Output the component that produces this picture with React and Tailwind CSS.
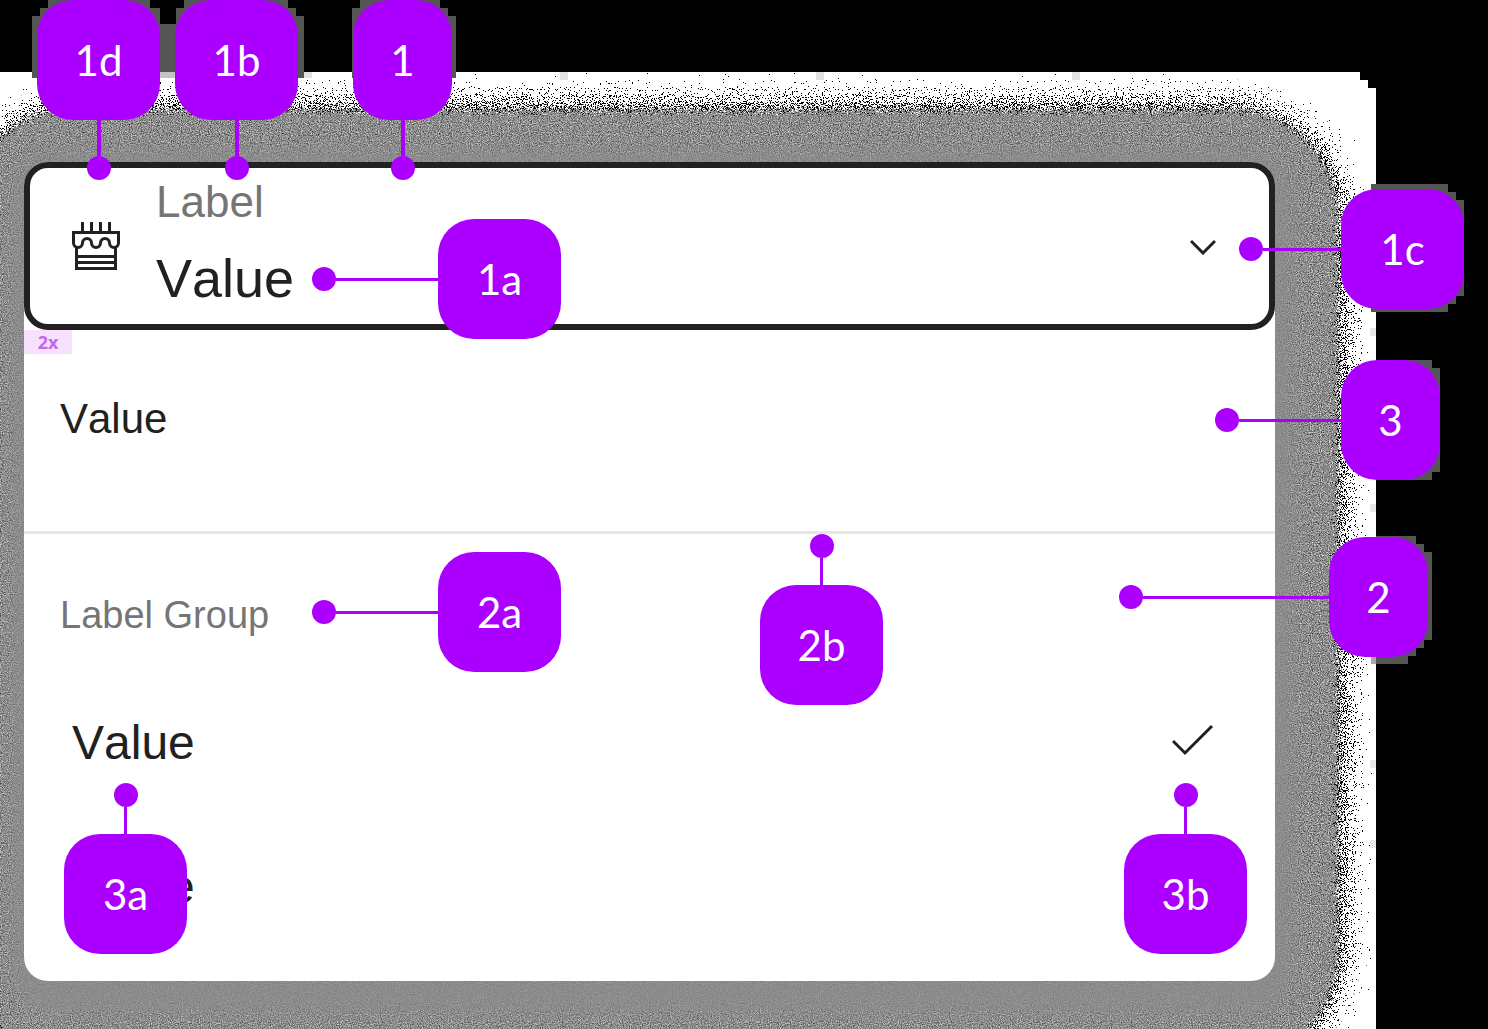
import React from "react";

const directions = {
  up: "flex-col-reverse",
  down: "flex-col",
  left: "flex-row-reverse",
};

function Callout({ id, point, stem, className = "" }) {
  const wide = id.length > 1;
  return (
    <div className={`flex items-center ${directions[point]} ${className}`}>
      <div
        className={`flex h-[120px] shrink-0 items-center justify-center rounded-[36px] bg-[#ab00ff] font-[Lato,sans-serif] text-[42px] leading-none text-white ${
          wide ? "w-[123px]" : "w-[99px]"
        }`}
      >
        {id}
      </div>
      <div className={`shrink-0 bg-[#ab00ff] ${stem}`} />
      <div className="size-6 shrink-0 rounded-full bg-[#ab00ff]" />
    </div>
  );
}

function CakeIcon() {
  return (
    <svg viewBox="0 0 48 48" className="size-12 shrink-0" fill="none" stroke="#212121" strokeWidth="3" aria-hidden="true">
      <path d="M10.5 0v10M19.5 0v10M28.5 0v10M37.5 0v10" />
      <path d="M1.5 10.5H46.5V21a4.5 4.5 0 0 1-9 0a4.5 4.5 0 0 0-9 0a4.5 4.5 0 0 1-9 0a4.5 4.5 0 0 0-9 0a4.5 4.5 0 0 1-9 0Z" />
      <path d="M4.5 25V46.5H43.5V25M4.5 34.5H43.5M4.5 40.5H43.5" />
    </svg>
  );
}

function Filters() {
  return (
    <svg className="absolute size-0" aria-hidden="true">
      <defs>
        <filter id="scatter" x="-10%" y="-10%" width="120%" height="120%" colorInterpolationFilters="sRGB">
          <feTurbulence type="fractalNoise" baseFrequency="0.87" numOctaves="2" seed="4" result="n" />
          <feDisplacementMap in="SourceGraphic" in2="n" scale="110" xChannelSelector="R" yChannelSelector="G" />
        </filter>
        <filter id="grain" x="-10%" y="-10%" width="120%" height="120%" colorInterpolationFilters="sRGB">
          <feTurbulence type="fractalNoise" baseFrequency="0.9" numOctaves="2" seed="9" result="n" />
          <feDisplacementMap in="SourceGraphic" in2="n" scale="26" xChannelSelector="R" yChannelSelector="G" result="d" />
          <feColorMatrix in="n" type="matrix" values="0 0 1 0 0.05  0 0 1 0 0.05  0 0 1 0 0.05  0 0 0 0 1" result="g" />
          <feComposite in="g" in2="d" operator="in" />
        </filter>
      </defs>
    </svg>
  );
}

function Shadow() {
  return (
    <div className="absolute inset-0 overflow-hidden" aria-hidden="true">
      <div className="absolute top-[72px] right-[112px] bottom-0 left-0 overflow-hidden bg-white [clip-path:polygon(0_0,calc(100%-16px)_0,calc(100%-16px)_8px,calc(100%-8px)_8px,calc(100%-8px)_16px,100%_16px,100%_100%,0_100%)]">
        <div className="absolute top-[37px] right-[37px] -bottom-[32px] -left-[34px] rounded-[110px] bg-black [filter:url(#scatter)]" />
        <div className="absolute top-[37px] right-[38px] -bottom-[32px] -left-[34px] rounded-[106px] bg-[#8c8c8c] [filter:url(#grain)]" />
        <div className="absolute top-[78px] right-[84px] bottom-[14px] left-[12px] rounded-[40px] bg-[#8c8c8c] opacity-80 blur-[10px]" />
      </div>
      <svg className="absolute top-0 left-0 h-[80px] w-[1100px]">
        <path fill="#555" d="M48 0H150V8H160V24H176V8H184V0H288V8H296V16H304V78H176V72H160V78H32V16H40V8H48Z" />
        <path fill="#555" d="M360 0H440V8H448V16H456V78H352V8H360Z" />
        <path fill="#c4c4c4" d="M160 72h16v6h-16Z" />
        <path fill="#e2e2e2" d="M304 72h8v6h-8ZM560 72h8v8h-8ZM816 72h8v8h-8ZM1072 72h8v8h-8Z" />
      </svg>
      <svg className="absolute top-0 right-0 h-[860px] w-[188px]">
        <path fill="#555" d="M71 184H148V192H156V200H164V296H156V304H148V312H71Z" />
        <path fill="#555" d="M76 360H132V368H140V472H132V480H76Z" />
        <path fill="#555" d="M76 536H116V544H124V552H132V640H124V648H116V656H108V664H76Z" />
        <path fill="#aaa" d="M71 656h5v8h-5Z" />
        <path fill="#e8e8e8" d="M70 328h6v8h-6ZM70 504h6v8h-6ZM70 760h6v8h-6ZM70 840h6v8h-6Z" />
      </svg>
    </div>
  );
}

export default function App() {
  return (
    <main className="relative min-h-screen overflow-hidden bg-black pt-[162px] pr-[213px] pb-12 pl-6 font-['Liberation_Sans',Arial,sans-serif] text-[#212121] [font-kerning:none]">
      <Filters />
      <Shadow />

      <section className="relative rounded-[24px] bg-white">
        <button
          type="button"
          aria-haspopup="listbox"
          aria-expanded="true"
          className="flex h-[168px] w-full items-center gap-9 rounded-[24px] border-[6px] border-[#212121] bg-white pr-[53px] pl-[42px] text-left"
        >
          <CakeIcon />
          <span className="flex grow flex-col gap-4 pb-2">
            <span className="text-[44px] leading-[56px] text-[#757575]">Label</span>
            <span className="text-[54px] leading-[64px]">Value</span>
          </span>
          <svg viewBox="0 0 26 18" className="h-[18px] w-[26px]" fill="none" stroke="#212121" strokeWidth="3" aria-hidden="true">
            <path d="M1 4L13 16L25 4" />
          </svg>
        </button>

        <div className="flex h-6 w-12 items-center justify-center bg-[#f6e2ff] font-['Noto_Sans',sans-serif] text-lg font-bold text-[#c466f0]">
          2x
        </div>

        <div role="listbox" aria-label="Label" className="pb-[22px]">
          <div role="option" aria-selected="false" className="flex h-[177px] items-start px-9 pt-10 text-[42px] leading-[50px]">
            Value
          </div>
          <div role="group" aria-labelledby="group-label" className="border-t-[3px] border-[#e5e5e5]">
            <div id="group-label" className="flex h-[137px] items-start px-9 pt-14 text-[38px] leading-[50px] text-[#757575]">
              Label Group
            </div>
            <div role="option" aria-selected="true" className="flex h-36 items-center justify-between pr-[61px] pl-12 text-[48px]">
              Value
              <svg viewBox="0 0 42 38" className="h-[38px] w-[42px]" fill="none" stroke="#212121" strokeWidth="3" aria-hidden="true">
                <path d="M1 17L13 29L40 2" />
              </svg>
            </div>
            <div role="option" aria-selected="false" className="flex h-36 items-center pl-12 text-[48px]">
              Value
            </div>
          </div>
        </div>
      </section>

      <div className="absolute top-0 left-[37px] flex gap-[15px]">
        <Callout id="1d" point="down" stem="h-9 w-1" />
        <Callout id="1b" point="down" stem="h-9 w-1" />
        <Callout id="1" point="down" stem="h-9 w-1" className="ml-10" />
      </div>
      <div className="absolute top-[189px] right-6 flex flex-col items-end gap-[51px]">
        <Callout id="1c" point="left" stem="h-[3px] w-[78px]" />
        <Callout id="3" point="left" stem="h-[3px] w-[102px]" className="mr-6" />
        <Callout id="2" point="left" stem="h-[3px] w-[186px]" className="mt-1.5 mr-9" />
      </div>
      <div className="absolute top-[219px] left-[312px] flex flex-col gap-[213px]">
        <Callout id="1a" point="left" stem="h-[3px] w-[102px]" />
        <Callout id="2a" point="left" stem="h-[3px] w-[102px]" />
      </div>
      <Callout id="2b" point="up" stem="h-[27px] w-[3px]" className="absolute top-[534px] left-[760px]" />
      <div className="absolute top-[783px] right-[241px] left-16 flex justify-between">
        <Callout id="3a" point="up" stem="h-[27px] w-[3px]" />
        <Callout id="3b" point="up" stem="h-[27px] w-[3px]" />
      </div>
    </main>
  );
}
